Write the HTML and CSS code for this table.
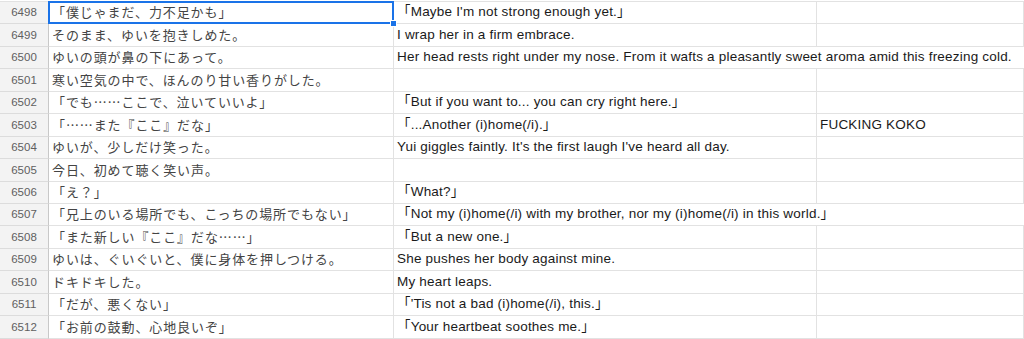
FILE: index.html
```html
<!DOCTYPE html>
<html lang="ja">
<head>
<meta charset="utf-8">
<title>Sheet</title>
<link rel="stylesheet" href="styles.css">
</head>
<body>
<div class="sheet">
  <div class="row"><div class="hd">6498</div><div class="ja selected">「僕じゃまだ、力不足かも」<span class="handle"></span></div><div class="en">「Maybe I'm not strong enough yet.」</div><div class="ex"></div></div>
  <div class="row"><div class="hd">6499</div><div class="ja">そのまま、ゆいを抱きしめた。</div><div class="en">I wrap her in a firm embrace.</div><div class="ex"></div></div>
  <div class="row"><div class="hd">6500</div><div class="ja">ゆいの頭が鼻の下にあって。</div><div class="en wide">Her head rests right under my nose. From it wafts a pleasantly sweet aroma amid this freezing cold.</div></div>
  <div class="row"><div class="hd">6501</div><div class="ja">寒い空気の中で、ほんのり甘い香りがした。</div><div class="en"></div><div class="ex"></div></div>
  <div class="row"><div class="hd">6502</div><div class="ja">「でも……ここで、泣いていいよ」</div><div class="en">「But if you want to... you can cry right here.」</div><div class="ex"></div></div>
  <div class="row"><div class="hd">6503</div><div class="ja">「……また『ここ』だな」</div><div class="en">「...Another (i)home(/i).」</div><div class="ex">FUCKING KOKO</div></div>
  <div class="row"><div class="hd">6504</div><div class="ja">ゆいが、少しだけ笑った。</div><div class="en">Yui giggles faintly. It's the first laugh I've heard all day.</div><div class="ex"></div></div>
  <div class="row"><div class="hd">6505</div><div class="ja">今日、初めて聴く笑い声。</div><div class="en"></div><div class="ex"></div></div>
  <div class="row"><div class="hd">6506</div><div class="ja">「え？」</div><div class="en">「What?」</div><div class="ex"></div></div>
  <div class="row"><div class="hd">6507</div><div class="ja">「兄上のいる場所でも、こっちの場所でもない」</div><div class="en wide">「Not my (i)home(/i) with my brother, nor my (i)home(/i) in this world.」</div></div>
  <div class="row"><div class="hd">6508</div><div class="ja">「また新しい『ここ』だな……」</div><div class="en">「But a new one.」</div><div class="ex"></div></div>
  <div class="row"><div class="hd">6509</div><div class="ja">ゆいは、ぐいぐいと、僕に身体を押しつける。</div><div class="en">She pushes her body against mine.</div><div class="ex"></div></div>
  <div class="row"><div class="hd">6510</div><div class="ja">ドキドキした。</div><div class="en">My heart leaps.</div><div class="ex"></div></div>
  <div class="row"><div class="hd">6511</div><div class="ja">「だが、悪くない」</div><div class="en">「'Tis not a bad (i)home(/i), this.」</div><div class="ex"></div></div>
  <div class="row"><div class="hd">6512</div><div class="ja">「お前の鼓動、心地良いぞ」</div><div class="en">「Your heartbeat soothes me.」</div><div class="ex"></div></div>
</div>
</body>
</html>
```
FILE: styles.css
```css
html, body {
  margin: 0;
  padding: 0;
  background: #ffffff;
  overflow: hidden;
}

.sheet {
  margin-top: 1px;
  border-top: 1px solid #e2e2e2;
  width: 1024px;
}

.row {
  display: grid;
  grid-template-columns: 49px 345px 423px 1fr;
  height: 22.45px;
}

.row > div {
  box-sizing: border-box;
  height: 22.45px;
  border-right: 1px solid #e2e2e2;
  border-bottom: 1px solid #e2e2e2;
  display: flex;
  align-items: flex-end;
  padding: 0 3px 3px 3px;
  line-height: 17px;
  white-space: nowrap;
  overflow: visible;
}

.row > .hd {
  background: #f3f3f3;
  border-right-color: #c8c8c8;
  border-bottom-color: #dcdcdc;
  justify-content: center;
  font-family: "Liberation Sans", Arial, sans-serif;
  font-size: 11.5px;
  color: #5f5f5f;
  padding-bottom: 2px;
}

.row > .ja {
  font-family: "Noto Sans CJK JP", sans-serif;
  font-size: 13px;
  letter-spacing: 0.9px;
  color: #444444;
}

.row > .en,
.row > .ex {
  font-family: "Liberation Sans", "Noto Sans CJK JP", Arial, sans-serif;
  font-size: 13.5px;
  letter-spacing: 0.2px;
  color: #1a1a1a;
}

.row > .wide {
  grid-column: span 2;
  border-right: none;
}

.row > .selected {
  position: relative;
}

.row > .selected::after {
  content: "";
  position: absolute;
  top: -1px;
  left: -1px;
  right: -1px;
  bottom: -1px;
  border: 2px solid #1a73e8;
  pointer-events: none;
}

.handle {
  position: absolute;
  right: -4px;
  bottom: -4px;
  width: 5px;
  height: 5px;
  background: #1a73e8;
  border: 1px solid #ffffff;
  z-index: 2;
}
```
